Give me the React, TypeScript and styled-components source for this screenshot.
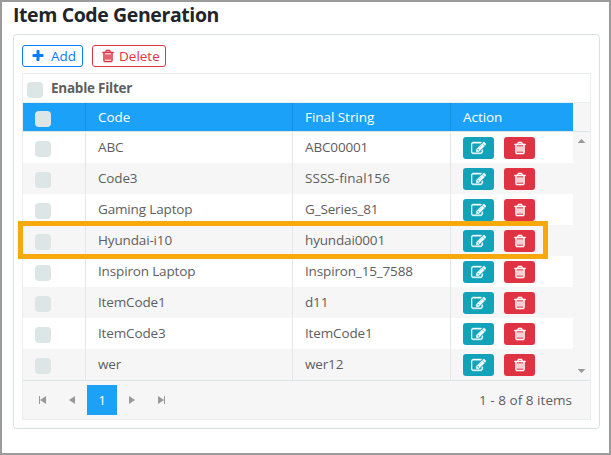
import React from 'react';
import styled, { createGlobalStyle } from 'styled-components';

const GlobalStyle = createGlobalStyle`
  * { box-sizing: border-box; }
  body { margin: 0; overflow: hidden; background: #fff; }
`;

const Frame = styled.main`
  position: relative;
  width: 611px;
  height: 455px;
  padding: 0 9px 0 11px;
  border: 2px solid #9b9b9b;
  background: #fff;
  color: #5e5e5e;
  font: 13.5px/18px 'Open Sans', 'Noto Sans', sans-serif;
`;

const Title = styled.h1`
  height: 32px;
  margin: 0;
  color: #212529;
  font-size: 19.5px;
  line-height: 26px;
  font-weight: 700;
  letter-spacing: -0.4px;
  white-space: nowrap;
`;

const Panel = styled.section`
  width: 587px;
  height: 395px;
  padding: 10px 8px;
  border: 1px solid #dadfdf;
  border-radius: 4px;
`;

const Toolbar = styled.div`
  display: flex;
  gap: 9px;
  height: 28px;
`;

const ToolButton = styled.button<{ $color: string; $width: number; $gap: number }>`
  display: flex;
  align-items: center;
  gap: ${({ $gap }) => $gap}px;
  width: ${({ $width }) => $width}px;
  height: 22px;
  padding: 0 0 0 8px;
  border: 1px solid ${({ $color }) => $color};
  border-radius: 3px;
  background: #fff;
  color: ${({ $color }) => $color};
  font: inherit;
  font-size: 13.5px;
  white-space: nowrap;
`;

const Grid = styled.div`
  display: flex;
  flex-direction: column;
  width: 569px;
  height: 347px;
  border: 1px solid #ebeeee;
`;

const FilterBar = styled.div`
  display: flex;
  gap: 8px;
  height: 29px;
  padding: 8px 0 0 4px;
  border-bottom: 1px solid #ebeeee;
  font-weight: 700;
  line-height: 13px;
  letter-spacing: -0.25px;
`;

const Check = styled.span`
  flex: none;
  width: 16px;
  height: 16px;
  border-radius: 4px;
  background: #dce6e6;
`;

const Columns = styled.div`
  display: grid;
  grid-template-columns: 63px 207px 158px 122px;
`;

const HeadArea = styled.div`
  display: flex;
  height: 29px;
  border-bottom: 1px solid #dce6e6;
  background: #f6f6f6;
`;

const HeadRow = styled(Columns)`
  height: 28px;
  background: #1ba1f8;
  color: #fff;
`;

const HeadCell = styled.div<{ $check?: boolean }>`
  padding: ${({ $check }) => ($check ? '8px 0 0 12px' : '5px 0 0 12px')};
  border-right: 1px solid #168ddd;
  letter-spacing: -0.05px;
  &:first-child { display: flex; }
  &:last-child { border-right: 0; }
`;

const Body = styled.div`
  display: flex;
  height: 248px;
`;

const Row = styled(Columns)<{ $alt: boolean }>`
  height: 31px;
  background: ${({ $alt }) => ($alt ? '#f6f6f6' : '#fff')};
`;

const Cell = styled.div<{ $spacing?: number }>`
  padding: 6px 0 0 12px;
  border-right: 1px solid #e1e8e8;
  letter-spacing: ${({ $spacing = -0.15 }) => $spacing}px;
  white-space: nowrap;
`;

const CheckCell = styled(Cell)`
  display: flex;
  padding-top: 9px;
`;

const Actions = styled.div`
  display: flex;
  gap: 10px;
  padding: 5px 0 0 12px;
`;

const ActionButton = styled.button<{ $danger?: boolean }>`
  display: grid;
  place-items: center;
  width: 31px;
  height: 22px;
  padding: 0;
  border: 0;
  border-radius: 3px;
  background: ${({ $danger }) => ($danger ? '#df3344' : '#12a3bb')};
  color: #fff;
`;

const ScrollTrack = styled.div`
  display: flex;
  flex-direction: column;
  justify-content: space-between;
  align-items: center;
  width: 17px;
  padding: 7px 0;
  background: #f6f6f6;
`;

const Arrow = styled.span<{ $down?: boolean }>`
  width: 8px;
  height: 4px;
  background: #999;
  clip-path: ${({ $down }) => ($down ? 'polygon(0 0, 100% 0, 50% 100%)' : 'polygon(50% 0, 100% 100%, 0 100%)')};
`;

const Pager = styled.footer`
  display: flex;
  align-items: center;
  flex: 1;
  padding: 0 18px 0 4px;
  border-top: 1px solid #dce6e6;
  background: #f6f6f6;
`;

const PageButton = styled.button<{ $active?: boolean }>`
  display: grid;
  place-items: center;
  width: 30px;
  height: 30px;
  padding: 0;
  border: 0;
  background: ${({ $active }) => ($active ? '#1ba1f8' : 'transparent')};
  color: ${({ $active }) => ($active ? '#fff' : '#999')};
  font: inherit;
`;

const Summary = styled.span`
  margin-left: auto;
  letter-spacing: 0.03px;
`;

const Highlight = styled.div`
  position: absolute;
  top: 219px;
  left: 16px;
  width: 530px;
  height: 38px;
  border: 5px solid #f7a90c;
  pointer-events: none;
`;

const paths = {
  plus: 'M1600 736v192q0 40-28 68t-68 28h-416v416q0 40-28 68t-68 28h-192q-40 0-68-28t-28-68v-416h-416q-40 0-68-28t-28-68v-192q0-40 28-68t68-28h416v-416q0-40 28-68t68-28h192q40 0 68 28t28 68v416h416q40 0 68 28t28 68z',
  trash: 'M704 736v576q0 14-9 23t-23 9h-64q-14 0-23-9t-9-23v-576q0-14 9-23t23-9h64q14 0 23 9t9 23zm256 0v576q0 14-9 23t-23 9h-64q-14 0-23-9t-9-23v-576q0-14 9-23t23-9h64q14 0 23 9t9 23zm256 0v576q0 14-9 23t-23 9h-64q-14 0-23-9t-9-23v-576q0-14 9-23t23-9h64q14 0 23 9t9 23zm128 724v-948h-896v948q0 22 7 40.5t14.5 27 10.5 8.5h832q3 0 10.5-8.5t14.5-27 7-40.5zm-672-1076h448l-48-117q-7-9-17-11h-317q-10 2-17 11zm928 32v64q0 14-9 23t-23 9h-96v948q0 83-47 143.5t-113 60.5h-832q-66 0-113-58.5t-47-141.5v-952h-96q-14 0-23-9t-9-23v-64q0-14 9-23t23-9h309l70-167q15-37 54-63t79-26h320q40 0 79 26t54 63l70 167h309q14 0 23 9t9 23z',
  edit: 'M888 1184l116-116-152-152-116 116v56h96v96h56zm440-720q-16-16-33 1l-350 350q-17 17-1 33t33-1l350-350q17-17 1-33zm80 594v190q0 119-84.5 203.5t-203.5 84.5h-832q-119 0-203.5-84.5t-84.5-203.5v-832q0-119 84.5-203.5t203.5-84.5h832q63 0 117 25 15 7 18 23 3 17-9 29l-49 49q-14 14-32 8-23-6-45-6h-832q-66 0-113 47t-47 113v832q0 66 47 113t113 47h832q66 0 113-47t47-113v-126q0-13 9-22l64-64q15-15 35-7t20 29zm-96-738l288 288-672 672h-288v-288zm444 132l-92 92-288-288 92-92q28-28 68-28t68 28l152 152q28 28 28 68t-28 68z',
};

const strokeWidths = { plus: 0, trash: 70, edit: 50 };

function Icon({ name, size = 14 }: { name: keyof typeof paths; size?: number }) {
  return (
    <svg width={size} height={size} viewBox="0 0 1792 1792" fill="currentColor" aria-hidden="true">
      <path d={paths[name]} stroke="currentColor" strokeWidth={strokeWidths[name]} />
    </svg>
  );
}

function PageIcon({ back = false, end = false }: { back?: boolean; end?: boolean }) {
  return (
    <svg width="10" height="10" viewBox="0 0 10 10" fill="currentColor" aria-hidden="true">
      <g transform={back ? 'translate(10 0) scale(-1 1)' : undefined}>
        <path d={end ? 'M1 1L7 5L1 9ZM7 1h1v8h-1z' : 'M2 1L8 5L2 9Z'} />
      </g>
    </svg>
  );
}

const items = [
  { code: 'ABC', final: 'ABC00001' },
  { code: 'Code3', final: 'SSSS-final156', spacing: 0.05 },
  { code: 'Gaming Laptop', final: 'G_Series_81' },
  { code: 'Hyundai-i10', final: 'hyundai0001' },
  { code: 'Inspiron Laptop', final: 'Inspiron_15_7588' },
  { code: 'ItemCode1', final: 'd11' },
  { code: 'ItemCode3', final: 'ItemCode1' },
  { code: 'wer', final: 'wer12' },
];

export default function App() {
  return (
    <>
      <GlobalStyle />
      <Frame>
        <Title>Item Code Generation</Title>
        <Panel>
          <Toolbar>
            <ToolButton $color="#087bff" $width={61} $gap={6}><Icon name="plus" />Add</ToolButton>
            <ToolButton $color="#dc3545" $width={74} $gap={4}><Icon name="trash" />Delete</ToolButton>
          </Toolbar>
          <Grid>
            <FilterBar><Check /><span>Enable Filter</span></FilterBar>
            <HeadArea>
              <HeadRow>
                <HeadCell $check><Check /></HeadCell>
                <HeadCell>Code</HeadCell>
                <HeadCell>Final String</HeadCell>
                <HeadCell>Action</HeadCell>
              </HeadRow>
            </HeadArea>
            <Body>
              <div>
                {items.map((item, i) => (
                  <Row key={item.code} $alt={i % 2 === 1}>
                    <CheckCell><Check /></CheckCell>
                    <Cell>{item.code}</Cell>
                    <Cell $spacing={item.spacing}>{item.final}</Cell>
                    <Actions>
                      <ActionButton aria-label="Edit"><Icon name="edit" size={15} /></ActionButton>
                      <ActionButton $danger aria-label="Delete"><Icon name="trash" /></ActionButton>
                    </Actions>
                  </Row>
                ))}
              </div>
              <ScrollTrack><Arrow /><Arrow $down /></ScrollTrack>
            </Body>
            <Pager>
              <PageButton aria-label="First page"><PageIcon back end /></PageButton>
              <PageButton aria-label="Previous page"><PageIcon back /></PageButton>
              <PageButton $active>1</PageButton>
              <PageButton aria-label="Next page"><PageIcon /></PageButton>
              <PageButton aria-label="Last page"><PageIcon end /></PageButton>
              <Summary>1 - 8 of 8 items</Summary>
            </Pager>
          </Grid>
        </Panel>
        <Highlight />
      </Frame>
    </>
  );
}
